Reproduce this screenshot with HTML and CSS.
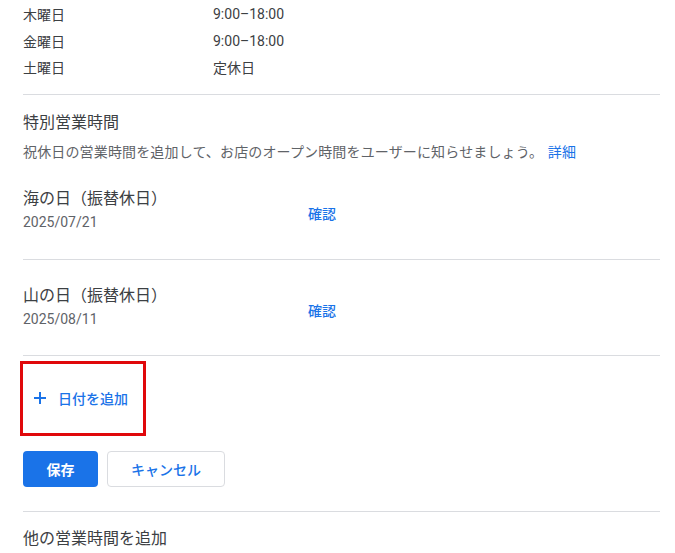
FILE: index.html
```html
<!DOCTYPE html>
<html lang="ja">
<head>
<meta charset="utf-8">
<link rel="stylesheet" href="styles.css">
</head>
<body>
<div class="page">
  <div class="hours">
    <div class="hours-row"><span class="day">木曜日</span><span class="time">9:00–18:00</span></div>
    <div class="hours-row"><span class="day">金曜日</span><span class="time">9:00–18:00</span></div>
    <div class="hours-row"><span class="day">土曜日</span><span class="time">定休日</span></div>
  </div>

  <section class="special">
    <h2 class="title">特別営業時間</h2>
    <p class="desc">祝休日の営業時間を追加して、お店のオープン時間をユーザーに知らせましょう。 <a class="link">詳細</a></p>

    <div class="holiday first">
      <div class="holiday-info">
        <div class="holiday-name">海の日（振替休日）</div>
        <div class="holiday-date">2025/07/21</div>
      </div>
      <a class="confirm">確認</a>
    </div>

    <div class="holiday">
      <div class="holiday-info">
        <div class="holiday-name">山の日（振替休日）</div>
        <div class="holiday-date">2025/08/11</div>
      </div>
      <a class="confirm">確認</a>
    </div>

    <div class="add-row">
      <button class="add-btn">
        <svg class="plus" width="12" height="12" viewBox="0 0 12 12"><path d="M6 0v12M0 6h12" stroke="#1a73e8" stroke-width="2" fill="none"/></svg>
        <span>日付を追加</span>
      </button>
      <div class="highlight"></div>
    </div>

    <div class="actions">
      <button class="btn primary">保存</button>
      <button class="btn secondary">キャンセル</button>
    </div>
  </section>

  <section class="other">
    <h2 class="title">他の営業時間を追加</h2>
  </section>
</div>
</body>
</html>
```

FILE: styles.css
```css
* { box-sizing: border-box; }
body {
  margin: 0;
  background: #fff;
  font-family: "Roboto", "Noto Sans CJK JP", sans-serif;
  color: #3c4043;
}
.page {
  width: 660px;
  padding-left: 23px;
}
.hours {
  padding-top: 1px;
  padding-bottom: 13px;
}
.hours-row {
  display: flex;
  height: 26.5px;
  align-items: center;
  font-size: 14px;
}
.day { width: 190px; }
.special {
  border-top: 1px solid #dadce0;
  padding-top: 17px;
}
.title {
  margin: 0;
  font-size: 16px;
  font-weight: 400;
  line-height: 22px;
  color: #3c4043;
}
.desc {
  margin: 8px 0 0;
  font-size: 14px;
  line-height: 20px;
  letter-spacing: 0.15px;
  color: #5f6368;
}
.link, .confirm {
  color: #1a73e8;
  text-decoration: none;
  font-weight: 500;
}
.link { font-weight: 400; margin-left: 1px; }
.holiday {
  display: flex;
  align-items: flex-start;
  padding: 25px 0 27px;
  border-bottom: 1px solid #dadce0;
}
.holiday.first { padding-top: 26px; padding-bottom: 28px; }
.holiday-info { width: 285px; }
.holiday-name {
  font-size: 16px;
  line-height: 22px;
}
.holiday-date {
  margin-top: 3px;
  font-size: 14px;
  line-height: 18px;
  color: #5f6368;
}
.confirm {
  margin-top: 16px;
  font-size: 14px;
  line-height: 20px;
}
.add-row {
  position: relative;
  height: 80px;
  padding-top: 24px;
}
.add-btn {
  display: flex;
  align-items: center;
  gap: 12px;
  height: 36px;
  padding: 0 0 0 11px;
  border: 0;
  background: none;
  font-family: inherit;
  font-size: 14px;
  font-weight: 500;
  color: #1a73e8;
}
.highlight {
  position: absolute;
  left: -3px;
  top: 5px;
  width: 126px;
  height: 75px;
  border: 3px solid #e0080b;
}
.actions {
  display: flex;
  gap: 9px;
  padding-top: 15px;
  padding-bottom: 24px;
}
.btn {
  height: 36px;
  border-radius: 4px;
  font-family: inherit;
  font-size: 14px;
  font-weight: 700;
}
.primary {
  width: 75px;
  background: #1a73e8;
  color: #fff;
  border: 0;
}
.secondary {
  width: 118px;
  background: #fff;
  color: #1a73e8;
  border: 1px solid #dadce0;
  font-weight: 500;
}
.other {
  border-top: 1px solid #dadce0;
  padding-top: 16px;
}
```
